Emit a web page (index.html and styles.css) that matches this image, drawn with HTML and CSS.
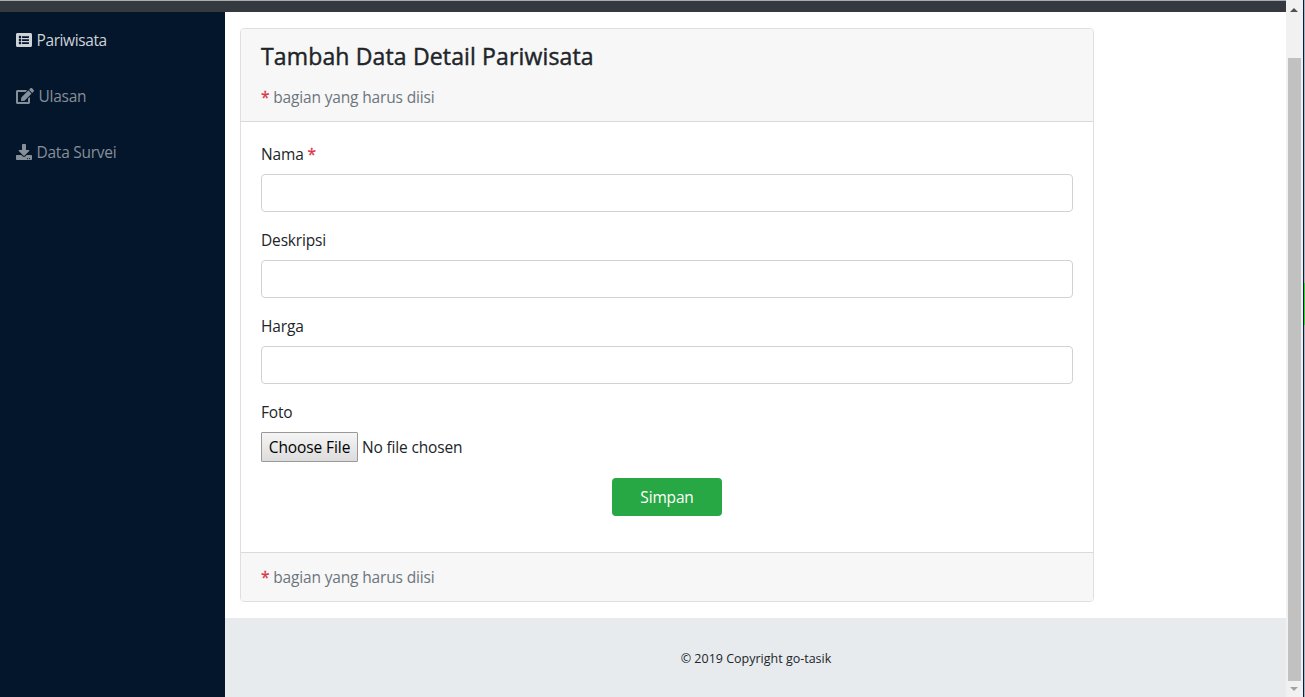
FILE: index.html
```html
<!DOCTYPE html>
<html lang="id">
<head>
<meta charset="utf-8">
<title>Tambah Data Detail Pariwisata</title>
<link rel="stylesheet" href="styles.css">
</head>
<body>
<div class="viewport">
  <div class="page">
    <header class="topbar"></header>
    <div class="layout">
      <nav class="sidebar">
        <a class="nav-link active"><svg width="16" height="16" viewBox="0 0 512 512"><path d="M464 480H48c-26.51 0-48-21.49-48-48V80c0-26.51 21.49-48 48-48h416c26.51 0 48 21.49 48 48v352c0 26.51-21.49 48-48 48zM128 120c-22.091 0-40 17.909-40 40s17.909 40 40 40 40-17.909 40-40-17.909-40-40-40zm0 96c-22.091 0-40 17.909-40 40s17.909 40 40 40 40-17.909 40-40-17.909-40-40-40zm0 96c-22.091 0-40 17.909-40 40s17.909 40 40 40 40-17.909 40-40-17.909-40-40-40zm288-136v-32c0-6.627-5.373-12-12-12H204c-6.627 0-12 5.373-12 12v32c0 6.627 5.373 12 12 12h200c6.627 0 12-5.373 12-12zm0 96v-32c0-6.627-5.373-12-12-12H204c-6.627 0-12 5.373-12 12v32c0 6.627 5.373 12 12 12h200c6.627 0 12-5.373 12-12zm0 96v-32c0-6.627-5.373-12-12-12H204c-6.627 0-12 5.373-12 12v32c0 6.627 5.373 12 12 12h200c6.627 0 12-5.373 12-12z"/></svg><span>Pariwisata</span></a>
        <a class="nav-link"><svg width="18" height="16" viewBox="0 0 576 512"><path d="M402.6 83.2l90.2 90.2c3.8 3.8 3.8 10 0 13.8L274.4 405.6l-92.8 10.3c-12.4 1.4-22.9-9.1-21.5-21.5l10.3-92.8L388.8 83.2c3.8-3.8 10-3.8 13.8 0zm162-22.9l-48.8-48.8c-15.2-15.2-39.9-15.2-55.2 0l-35.4 35.4c-3.8 3.8-3.8 10 0 13.8l90.2 90.2c3.8 3.8 10 3.8 13.8 0l35.4-35.4c15.2-15.3 15.2-40 0-55.2zM384 346.2V448H64V128h229.8c3.2 0 6.2-1.3 8.5-3.5l40-40c7.6-7.6 2.2-20.5-8.5-20.5H48C21.5 64 0 85.5 0 112v352c0 26.5 21.5 48 48 48h352c26.5 0 48-21.5 48-48V306.2c0-10.7-12.9-16-20.5-8.5l-40 40c-2.2 2.3-3.5 5.3-3.5 8.5z"/></svg><span>Ulasan</span></a>
        <a class="nav-link"><svg width="16" height="16" viewBox="0 0 512 512"><path d="M216 0h80c13.3 0 24 10.7 24 24v168h87.7c17.8 0 26.7 21.5 14.1 34.1L269.7 378.3c-7.5 7.5-19.8 7.5-27.3 0L90.1 226.1c-12.6-12.6-3.7-34.1 14.1-34.1H192V24c0-13.3 10.7-24 24-24zm296 376v112c0 13.3-10.7 24-24 24H24c-13.3 0-24-10.7-24-24V376c0-13.3 10.7-24 24-24h146.7l49 49c20.1 20.1 52.5 20.1 72.6 0l49-49H488c13.3 0 24 10.7 24 24zm-124 88c0-11-9-20-20-20s-20 9-20 20 9 20 20 20 20-9 20-20zm64 0c0-11-9-20-20-20s-20 9-20 20 9 20 20 20 20-9 20-20z"/></svg><span>Data Survei</span></a>
      </nav>
      <div class="content">
        <main class="main">
          <section class="card">
            <div class="card-header">
              <h4 class="title">Tambah Data Detail Pariwisata</h4>
              <p class="note"><span class="required">*</span> bagian yang harus diisi</p>
            </div>
            <form class="card-body">
              <div class="group"><label class="label" for="nama">Nama <span class="required">*</span></label><input class="control" id="nama" type="text"></div>
              <div class="group"><label class="label" for="deskripsi">Deskripsi</label><input class="control" id="deskripsi" type="text"></div>
              <div class="group"><label class="label" for="harga">Harga</label><input class="control" id="harga" type="text"></div>
              <div class="group">
                <span class="label">Foto</span>
                <div class="file"><button class="choose" type="button">Choose File</button><span class="file-name">No file chosen</span></div>
              </div>
              <button class="submit" type="button">Simpan</button>
            </form>
            <div class="card-footer"><p class="note"><span class="required">*</span> bagian yang harus diisi</p></div>
          </section>
        </main>
        <footer class="footer"><span>© 2019 Copyright go-tasik</span></footer>
      </div>
    </div>
  </div>
  <div class="scrollbar">
    <svg class="arrow up" width="16" height="17" viewBox="0 0 16 17"><path d="M4 12h8L8 8z"/></svg>
    <div class="track"><div class="thumb"></div></div>
    <svg class="arrow down" width="16" height="16" viewBox="0 0 16 16"><path d="M4 6h8l-4 4z"/></svg>
  </div>
  <div class="edge"><div class="edge-mark"></div></div>
</div>
</body>
</html>
```
FILE: styles.css
```css
* { box-sizing: border-box; }
body { margin: 0; font: 15.5px/24px "Open Sans", "Noto Sans", sans-serif; letter-spacing: -0.16px; color: #212529; background: #fff; overflow: hidden; }
h4, p { margin: 0; }
.viewport { display: flex; width: 1305px; height: 697px; }
.page { display: flex; flex-direction: column; width: 1286px; }
.topbar { height: 12px; background: #343a40; border-top: 1px solid #a9adb0; }
.layout { display: flex; flex: 1; }
.sidebar { width: 225px; background: #04162b; }
.nav-link { display: flex; align-items: center; gap: 4.5px; height: 56px; padding-left: 16px; color: #878f99; letter-spacing: -0.25px; }
.nav-link svg { display: block; fill: currentColor; }
.nav-link.active { color: #cfd3d8; letter-spacing: -0.4px; }
.nav-link span { white-space: nowrap; }
.content { display: flex; flex-direction: column; flex: 1; }
.main { padding: 16px 15px; }
.card { width: 854px; height: 574px; display: flex; flex-direction: column; border: 1px solid #dfdfdf; border-radius: 4px; overflow: hidden; }
.card-header { height: 93px; padding: 13px 20px 0; background: #f7f7f7; border-bottom: 1px solid #dadada; }
.title { font-size: 23px; line-height: 29px; font-weight: 500; letter-spacing: 0.15px; -webkit-text-stroke: 0.45px currentColor; margin-bottom: 14px; white-space: nowrap; }
.note { color: #6c757d; }
.required { color: #dc3545; -webkit-text-stroke: 0.3px currentColor; }
.card-body { flex: 1; display: flex; flex-direction: column; padding: 20px; }
.group { margin-bottom: 16px; }
.label { display: block; margin-bottom: 8px; }
.control { display: block; width: 100%; height: 38px; padding: 6px 12px; border: 1px solid #d0d2d5; border-radius: 4px; background: #fff; font: inherit; }
.file { display: flex; align-items: center; gap: 4px; height: 30px; }
.choose { width: 97px; height: 30px; padding: 0; border: 1px solid #999; border-radius: 1px; background: linear-gradient(#f5f5f5, #dcdcdc); font: inherit; letter-spacing: -0.1px; color: #000; white-space: nowrap; }
.submit { align-self: center; width: 110px; height: 38px; padding: 0; border: 0; border-radius: 4px; background: #28a745; color: #fff; font: inherit; letter-spacing: -0.16px; }
.card-footer { height: 49px; padding: 12px 20px; background: #f7f7f7; border-top: 1px solid #dadada; }
.footer { flex: 1; padding: 29px 0 0 1px; background: #e7ebee; text-align: center; font-size: 12.5px; letter-spacing: 0; }
.scrollbar { display: flex; flex-direction: column; width: 17px; background: #f1f1f1; }
.arrow { display: block; fill: #505050; }
.arrow.down { fill: #a3a3a3; }
.track { flex: 1; padding: 41px 2px 0; }
.thumb { height: 623px; background: #c1c1c1; }
.edge { width: 2px; padding-top: 283px; background: #a9b4c2; border-left: 1px solid #091c34; }
.edge-mark { height: 42px; background: #36d43d; }
```
